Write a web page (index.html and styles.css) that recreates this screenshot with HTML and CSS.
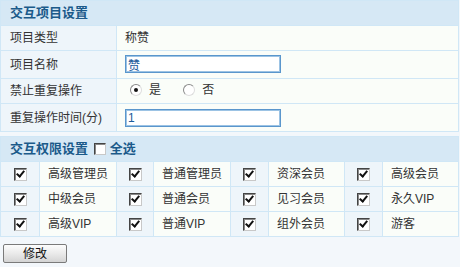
FILE: index.html
```html
<!DOCTYPE html>
<html lang="zh-CN">

<head>
  <meta charset="UTF-8">
  <title>交互项目设置</title>
  <link rel="stylesheet" href="styles.css">
</head>

<body>
  <table class="grid setting">
    <colgroup>
      <col class="c-label"><col class="c-value">
    </colgroup>
    <tr>
      <th colspan="2" class="head">交互项目设置</th>
    </tr>
    <tr>
      <td class="label">项目类型</td>
      <td class="value">称赞</td>
    </tr>
    <tr class="tall">
      <td class="label">项目名称</td>
      <td class="value"><input type="text" class="input" value="赞"></td>
    </tr>
    <tr>
      <td class="label">禁止重复操作</td>
      <td class="value">
        <label class="radio"><input type="radio" name="repeat" checked>是</label>
        <label class="radio"><input type="radio" name="repeat">否</label>
      </td>
    </tr>
    <tr class="tall">
      <td class="label">重复操作时间(分)</td>
      <td class="value"><input type="text" class="input" value="1"></td>
    </tr>
  </table>

  <table class="grid rights">
    <colgroup>
      <col class="c-check1"><col class="c-name1">
      <col class="c-check2"><col class="c-name1">
      <col class="c-check3"><col class="c-name2">
      <col class="c-check3"><col class="c-name2">
    </colgroup>
    <tr>
      <th colspan="8" class="head">交互权限设置 <label class="all"><input type="checkbox" class="box"> 全选</label></th>
    </tr>
    <tr>
      <td class="check"><input type="checkbox" class="box" checked></td>
      <td class="value">高级管理员</td>
      <td class="check"><input type="checkbox" class="box" checked></td>
      <td class="value">普通管理员</td>
      <td class="check"><input type="checkbox" class="box" checked></td>
      <td class="value">资深会员</td>
      <td class="check"><input type="checkbox" class="box" checked></td>
      <td class="value">高级会员</td>
    </tr>
    <tr>
      <td class="check"><input type="checkbox" class="box" checked></td>
      <td class="value">中级会员</td>
      <td class="check"><input type="checkbox" class="box" checked></td>
      <td class="value">普通会员</td>
      <td class="check"><input type="checkbox" class="box" checked></td>
      <td class="value">见习会员</td>
      <td class="check"><input type="checkbox" class="box" checked></td>
      <td class="value">永久VIP</td>
    </tr>
    <tr>
      <td class="check"><input type="checkbox" class="box" checked></td>
      <td class="value">高级VIP</td>
      <td class="check"><input type="checkbox" class="box" checked></td>
      <td class="value">普通VIP</td>
      <td class="check"><input type="checkbox" class="box" checked></td>
      <td class="value">组外会员</td>
      <td class="check"><input type="checkbox" class="box" checked></td>
      <td class="value">游客</td>
    </tr>
  </table>

  <div class="actions">
    <button class="btn">修改</button>
  </div>
</body>

</html>
```

FILE: styles.css
```css
html,
body {
  margin: 0;
  background-color: #f3f7fb;
  font-family: "Liberation Sans", "Noto Sans CJK SC", sans-serif;
  font-size: 12px;
  color: #333;
}

.grid {
  width: 459px;
  border-collapse: separate;
  border-spacing: 1px;
  background-color: #d0e7f6;
  table-layout: fixed;
}

.grid td,
.grid th {
  padding: 0;
  height: 24px;
  line-height: 16px;
  vertical-align: middle;
}

.grid .tall td {
  height: 27px;
}

.c-label { width: 115px; }
.c-value { width: 341px; }

.head {
  background-color: #d6e8f5;
  color: #1b5a8a;
  font-size: 13px;
  font-weight: bold;
  text-align: left;
  padding-left: 9px !important;
}

.label {
  padding-left: 9px !important;
  background-color: #eef5fa;
  white-space: nowrap;
}

.value {
  padding-left: 8px !important;
  background-color: #fafdf9;
}

.input {
  box-sizing: border-box;
  width: 156px;
  height: 18px;
  margin: 0;
  padding: 0 2px;
  border: 1px solid #5a96cc;
  box-shadow: inset 0 0 0 1px #9cc3e4;
  font-family: inherit;
  font-size: 12px;
  color: #1b5a9a;
  background: #fff;
  outline: none;
}

.radio {
  display: inline-flex;
  align-items: center;
  gap: 7px;
  margin-left: 5px;
  margin-right: 14px;
}

.radio input {
  appearance: none;
  width: 12px;
  height: 12px;
  margin: 0;
  border: 1px solid #8a8a8a;
  border-right-color: #ddd;
  border-bottom-color: #ddd;
  border-radius: 50%;
  background: #fff;
  position: relative;
}

.radio input:checked::after {
  content: "";
  position: absolute;
  left: 3px;
  top: 3px;
  width: 4px;
  height: 4px;
  border-radius: 50%;
  background: #111;
}

.setting {
  margin-bottom: 4px;
}

.c-check1 { width: 38px; }
.c-check2 { width: 36px; }
.c-check3 { width: 37px; }
.c-name1 { width: 76px; }
.c-name2 { width: 75px; }

.check {
  text-align: center;
  background-color: #eef5fa;
}

.box {
  appearance: none;
  width: 13px;
  height: 13px;
  margin: 0;
  vertical-align: middle;
  border: 1px solid #444;
  border-right-color: #c8c8c8;
  border-bottom-color: #c8c8c8;
  background: #fff;
  box-shadow: inset 1px 1px 0 #888;
  position: relative;
}

.box:checked::after {
  content: "";
  position: absolute;
  left: 3px;
  top: 0px;
  width: 3px;
  height: 6px;
  border: solid #111;
  border-width: 0 2px 2px 0;
  transform: rotate(40deg);
}

.all {
  display: inline-flex;
  align-items: center;
  gap: 4px;
  margin-left: 2px;
  vertical-align: top;
}

.all .box {
  width: 12px;
  height: 12px;
}

.actions {
  padding: 7px 0 0 3px;
}

.btn {
  box-sizing: border-box;
  width: 64px;
  height: 19px;
  padding: 0;
  border: 1px solid #7a7a7a;
  border-radius: 2px;
  background: linear-gradient(#fdfdfd, #e6e6e6 60%, #d4d4d4);
  font-family: inherit;
  font-size: 12px;
  line-height: 16px;
  color: #111;
  cursor: pointer;
}
```
